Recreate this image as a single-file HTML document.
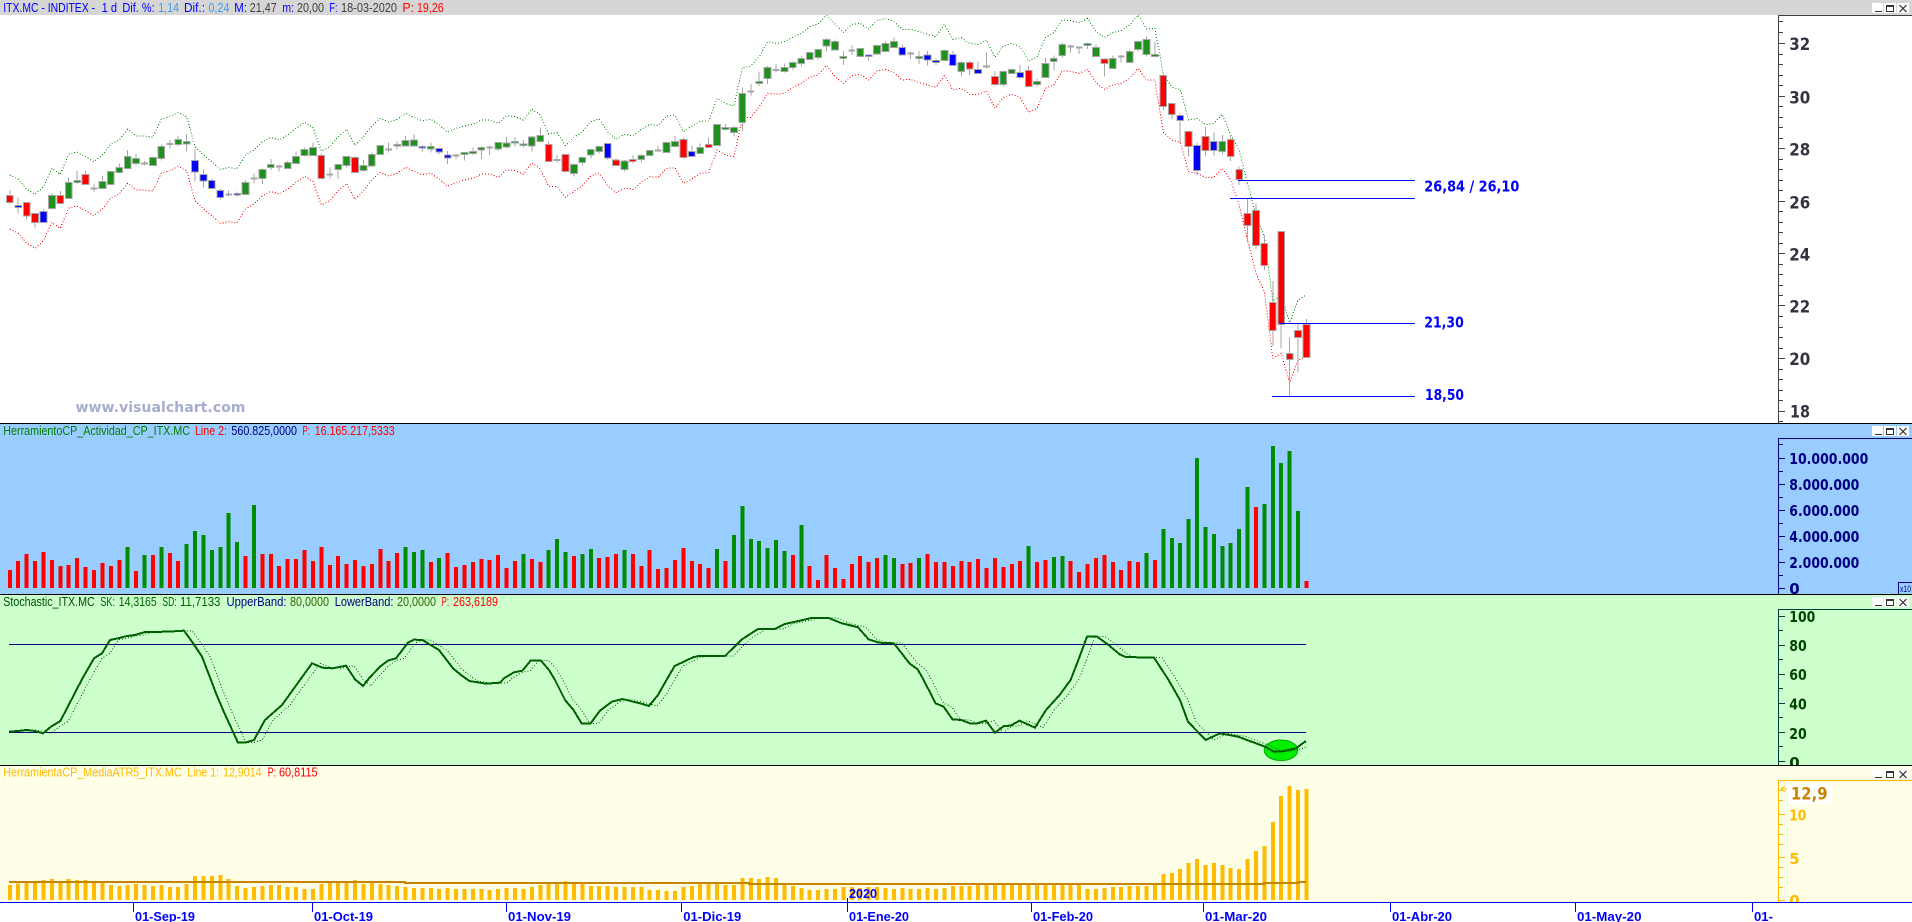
<!DOCTYPE html>
<html lang="es"><head><meta charset="utf-8"><title>ITX.MC - INDITEX</title>
<style>
html,body{margin:0;padding:0;width:1912px;height:922px;overflow:hidden;background:#fff}
svg{display:block}
text{white-space:pre}
.h{font:12.5px "Liberation Sans",sans-serif}
.a{font:bold 15px "DejaVu Sans",sans-serif}
.b{font:bold 17px "DejaVu Sans",sans-serif}
.d{font:bold 13px "Liberation Sans",sans-serif;fill:#00f}
.ns{vector-effect:non-scaling-stroke;fill:none}
.ns path,path.ns{vector-effect:non-scaling-stroke}
</style></head><body>
<svg xmlns="http://www.w3.org/2000/svg" width="1912" height="922" viewBox="0 0 1912 922" shape-rendering="crispEdges">
<defs>
<clipPath id="sdclip"><rect x="9" y="595" width="1297" height="170"/></clipPath>
<g id="btn">
<rect x="1872" y="0" width="11" height="10" fill="#fff"/><rect x="1884" y="0" width="12" height="10" fill="#fff"/><rect x="1897" y="0" width="12" height="10" fill="#fff"/>
<path d="M1875 8.5h7M1886.5 2.5h7v6h-7zM1886.5 3.5h7" fill="none" stroke="#333"/>
<path d="M1899.5 2L1906.5 9M1906.5 2L1899.5 9" fill="none" stroke="#333" stroke-width="1.2" shape-rendering="auto"/>
</g>
<path id="sk" d="M9 935L18 933 26.500 930 35 933 43 940 51 920 60.400 903 81.600 780 94 715 102 700 110 660 118 655 127 648 135 645 145 636 168 635 184 632 192 665 202 710 211 780 216 820 224.500 880 238 968 245 968 254 960 265 900 282 855 300 780 312 730 322.400 743 332.700 745 346 737 355 778 363 798 369 775 380 740 388 722 396 715 408 668 414 659 422.400 660 439 690 453 745 461 765 469.400 783 486 791 500 788 504 775 514 757 522.400 752 530.600 722 541 722 549 750 555 780 565 840 573.500 870 581.600 910 590.600 910 600 872 612 845 622.400 837 640 850 649 858 658 825 666.500 780 674.700 738 693 712 699 708 725 708 742 658 758 627 774.700 627 785 612 803 600 811.400 594 828.600 594 842 610 858 622 868.600 658 879 668 894 670 909.400 730 917.600 748 923.700 780 935.500 850 943.600 860 952.500 898 961.400 900 970 910 977 910 986 902 995 938 1004 918 1010.500 917 1019.500 902 1035 923 1046 870 1059.600 825 1070.600 780 1079 715 1087 650 1097 650 1107.300 672 1119.600 703 1125.700 711 1154 713 1168.600 780 1180 840 1188 905 1205.600 960 1220 940 1238 950 1265 980 1274 995 1280.600 995 1296 985 1306 963" style="vector-effect:non-scaling-stroke"/>
</defs>

<!-- panel backgrounds -->
<rect width="1912" height="423" fill="#fff"/>
<rect y="424" width="1912" height="170" fill="#9cf"/>
<rect y="595" width="1912" height="170" fill="#cfc"/>
<rect y="766" width="1912" height="136" fill="#ffffe8"/>

<!-- price panel -->
<g transform="translate(9.8 0) scale(8.42 .33333)">
<path class="ns" stroke="#080" stroke-dasharray="1 2" d="M0 525L1 537 2 568 3 583 4 560 5 505 6 523 7 462 8 456 9 470 10 485 11 465 12 432 13 420 14 388 15 408 16 408 17 412 18 357 19 350 20 337 21 350 22 440 23 465 24 485 25 508 26 503 27 506 28 465 29 450 30 425 31 412 32 420 33 405 34 385 35 367 36 382 37 453 38 440 39 410 40 388 41 437 42 410 43 378 44 355 45 366 46 358 47 340 48 352 49 362 50 358 51 375 52 397 53 385 54 378 55 373 56 360 57 360 58 370 59 347 60 350 61 360 62 327 63 345 64 402 65 398 66 437 67 412 68 395 69 365 70 357 71 395 72 418 73 403 74 407 75 388 76 373 77 377 78 348 79 345 80 395 81 378 82 363 83 363 84 295 85 310 86 318 87 203 88 198 89 170 90 125 91 130 92 125 93 112 94 100 95 80 96 72 97 45 98 72 99 97 100 73 101 70 102 87 103 62 104 55 105 65 106 88 107 88 108 95 109 103 110 110 111 73 112 118 113 113 114 130 115 133 116 120 117 172 118 138 119 130 120 140 121 182 122 172 123 112 124 98 125 60 126 62 127 68 128 55 129 95 130 112 131 98 132 92 133 75 134 45 135 87 136 85 137 222 138 262 139 268 140 360 141 355 142 374 143 370 144 343 145 405 146 450 147 550 148 645 149 710 150 903 151 885 152 968 153 900 154 885"/>
<path class="ns" stroke="#f00" stroke-dasharray="1 2" d="M0 687L1 699 2 730 3 745 4 722 5 667 6 685 7 624 8 618 9 632 10 647 11 627 12 594 13 582 14 550 15 570 16 570 17 574 18 519 19 512 20 499 21 512 22 602 23 627 24 647 25 670 26 665 27 668 28 627 29 612 30 587 31 574 32 582 33 567 34 547 35 529 36 544 37 615 38 602 39 572 40 550 41 599 42 572 43 540 44 517 45 528 46 520 47 502 48 514 49 524 50 520 51 537 52 559 53 547 54 540 55 535 56 522 57 522 58 532 59 509 60 512 61 522 62 489 63 507 64 560 65 560 66 592 67 574 68 557 69 527 70 519 71 557 72 578 73 565 74 568 75 548 76 530 77 532 78 505 79 503 80 550 81 537 82 520 83 518 84 450 85 465 86 470 87 355 88 352 89 320 90 280 91 283 92 280 93 262 94 250 95 232 96 225 97 196 98 230 99 250 100 227 101 223 102 240 103 213 104 208 105 218 106 240 107 238 108 248 109 255 110 262 111 227 112 270 113 265 114 283 115 283 116 273 117 325 118 292 119 283 120 293 121 337 122 325 123 265 124 255 125 212 126 215 127 220 128 208 129 248 130 268 131 255 132 250 133 235 134 205 135 240 136 240 137 398 138 420 139 427 140 515 141 520 142 532 143 532 144 505 145 540 146 615 147 720 148 820 149 875 150 1075 151 1060 152 1148 153 1080 154 1070"/>
<path class="ns" stroke="#a6a6a6" d="M0 570V612M1 592V640M2 608V658M3 641V683M4 628V667M5 580V628M6 573V612M7 532V597M8 513V552M9 513V555M10 550V575M11 528V567M12 515V555M13 490V520M14 450V507M15 462V497M16 483V497M17 470V498M18 434V482M19 420V445M20 408V440M21 402V455M22 447V545M23 507V563M24 535V565M25 567V598M26 572V590M27 575V590M28 540V585M29 520V550M30 505V552M31 477V510M32 493V515M33 483V505M34 455V490M35 443V470M36 428V466M37 460V538M38 502V535M39 490V537M40 468V502M41 468V517M42 480V515M43 458V500M44 435V465M45 428V458M46 425V448M47 408V440M48 402V440M49 435V455M50 427V458M51 442V463M52 453V492M53 462V478M54 456V482M55 442V465M56 440V477M57 437V465M58 428V453M59 411V445M60 411V440M61 420V443M62 408V455M63 382V428M64 424V486M65 465V488M66 462V517M67 490V530M68 470V497M69 445V475M70 436V460M71 431V478M72 476V498M73 480V514M74 465V490M75 462V488M76 450V468M77 437V456M78 425V458M79 408V442M80 412V476M81 436V470M82 430V460M83 412V442M84 372V437M85 372V392M86 376V410M87 262V395M88 252V287M89 216V258M90 198V252M91 190V218M92 190V218M93 185V210M94 170V200M95 155V180M96 147V178M97 114V155M98 118V152M99 153V195M100 135V165M101 144V170M102 163V183M103 133V165M104 124V157M105 113V143M106 133V165M107 155V177M108 153V192M109 153V197M110 175V195M111 149V182M112 153V198M113 185V230M114 183V225M115 185V222M116 158V205M117 213V258M118 212V260M119 205V222M120 195V236M121 198V261M122 235V260M123 172V234M124 167V210M125 127V172M126 135V158M127 140V162M128 128V147M129 133V172M130 175V230M131 166V207M132 165V188M133 148V189M134 122V155M135 110V170M136 125V172M137 222V330M138 311V357M139 340V430M140 392V470M141 427V527M142 380V470M143 397V467M144 405V464M145 408V483M146 500V555M147 597V725M148 610V747M149 705V810M150 843V1038M151 694V1045M152 1013V1188M153 972V1118M154 957V1072"/>
<path class="ns" stroke="#a6a6a6" stroke-width="2" d="M9.6 566h.8M15.6 490h.8M18.6 432h.8M25.6 583h.8M28.6 535h.8M31.6 500h.8M37.6 524h.8M44.6 448h.8M52.6 467h.8M56.6 442h.8M64.6 480h.8M76.6 452h.8M87.6 275h.8M90.6 210h.8M99.6 151h.8M106.6 161h.8M115.6 200h.8M125.6 139h.8M126.6 143h.8M131.6 170h.8"/>
<path class="ns" style="fill:#1e901e" stroke="#a6a6a6" d="M4.6 586h.8V625h-.8zM6.6 548h.8V595h-.8zM7.6 541h.8V548h-.8zM10.6 545h.8V565h-.8zM11.6 515h.8V553h-.8zM12.6 502h.8V517h-.8zM13.6 470h.8V505h-.8zM14.6 476h.8V490h-.8zM16.6 473h.8V496h-.8zM17.6 440h.8V475h-.8zM19.6 419h.8V433h-.8zM20.6 425h.8V432h-.8zM27.6 548h.8V583h-.8zM29.6 508h.8V535h-.8zM30.6 493h.8V502h-.8zM32.6 488h.8V505h-.8zM33.6 470h.8V490h-.8zM34.6 449h.8V467h-.8zM35.6 442h.8V466h-.8zM38.6 494h.8V508h-.8zM39.6 469h.8V496h-.8zM41.6 497h.8V511h-.8zM42.6 464h.8V498h-.8zM43.6 437h.8V463h-.8zM45.6 433h.8V438h-.8zM46.6 422h.8V438h-.8zM47.6 420h.8V438h-.8zM49.6 440h.8V447h-.8zM53.6 458h.8V463h-.8zM54.6 455h.8V460h-.8zM55.6 442h.8V450h-.8zM57.6 428h.8V447h-.8zM58.6 429h.8V441h-.8zM59.6 425h.8V429h-.8zM60.6 432h.8V437h-.8zM61.6 411h.8V438h-.8zM62.6 407h.8V425h-.8zM66.6 494h.8V520h-.8zM67.6 472h.8V487h-.8zM68.6 449h.8V465h-.8zM69.6 440h.8V454h-.8zM72.6 483h.8V508h-.8zM74.6 466h.8V478h-.8zM75.6 452h.8V466h-.8zM77.6 428h.8V457h-.8zM78.6 424h.8V440h-.8zM81.6 443h.8V460h-.8zM83.6 373h.8V437h-.8zM84.6 382h.8V388h-.8zM85.6 383h.8V397h-.8zM86.6 280h.8V367h-.8zM88.6 244h.8V250h-.8zM89.6 203h.8V236h-.8zM91.6 203h.8V214h-.8zM92.6 188h.8V202h-.8zM93.6 175h.8V190h-.8zM94.6 157h.8V178h-.8zM95.6 149h.8V172h-.8zM96.6 119h.8V138h-.8zM97.6 125h.8V150h-.8zM98.6 170h.8V175h-.8zM100.6 146h.8V169h-.8zM102.6 137h.8V162h-.8zM103.6 130h.8V154h-.8zM104.6 125h.8V142h-.8zM107.6 170h.8V175h-.8zM110.6 152h.8V181h-.8zM112.6 188h.8V214h-.8zM117.6 215h.8V254h-.8zM118.6 208h.8V220h-.8zM121.6 245h.8V253h-.8zM122.6 191h.8V232h-.8zM123.6 176h.8V184h-.8zM124.6 133h.8V166h-.8zM127.6 130h.8V136h-.8zM128.6 142h.8V170h-.8zM130.6 176h.8V205h-.8zM132.6 155h.8V187h-.8zM133.6 125h.8V149h-.8zM134.6 119h.8V163h-.8zM135.6 164h.8V169h-.8zM143.6 424h.8V454h-.8z"/>
<path class="ns" style="fill:#f00" stroke="#a6a6a6" d="M-.4 587h.8V607h-.8zM1.6 608h.8V648h-.8zM2.6 641h.8V667h-.8zM5.6 587h.8V610h-.8zM8.6 524h.8V553h-.8zM36.6 467h.8V536h-.8zM40.6 473h.8V517h-.8zM63.6 434h.8V484h-.8zM65.6 464h.8V514h-.8zM71.6 480h.8V496h-.8zM73.6 479h.8V484h-.8zM79.6 419h.8V472h-.8zM82.6 433h.8V442h-.8zM113.6 188h.8V207h-.8zM116.6 230h.8V254h-.8zM120.6 212h.8V259h-.8zM129.6 177h.8V190h-.8zM136.6 227h.8V319h-.8zM137.6 311h.8V343h-.8zM139.6 394h.8V439h-.8zM141.6 409h.8V451h-.8zM144.6 419h.8V470h-.8zM145.6 508h.8V538h-.8zM146.6 641h.8V676h-.8zM147.6 631h.8V737h-.8zM148.6 730h.8V796h-.8zM149.6 907h.8V991h-.8zM150.6 694h.8V973h-.8zM151.6 1061h.8V1078h-.8zM152.6 991h.8V1012h-.8zM153.6 973h.8V1072h-.8z"/>
<path class="ns" style="fill:#00f" stroke="#a6a6a6" d="M.6 617h.8V622h-.8zM3.6 635h.8V667h-.8zM21.6 482h.8V516h-.8zM22.6 524h.8V543h-.8zM23.6 542h.8V565h-.8zM24.6 572h.8V592h-.8zM26.6 581h.8V585h-.8zM48.6 440h.8V444h-.8zM50.6 446h.8V456h-.8zM51.6 465h.8V474h-.8zM70.6 431h.8V474h-.8zM80.6 455h.8V470h-.8zM101.6 165h.8V169h-.8zM105.6 143h.8V165h-.8zM108.6 165h.8V180h-.8zM109.6 182h.8V187h-.8zM111.6 164h.8V196h-.8zM114.6 209h.8V220h-.8zM119.6 218h.8V232h-.8zM138.6 347h.8V361h-.8zM140.6 437h.8V511h-.8zM142.6 425h.8V451h-.8z"/>
</g>
<path d="M1238 180.500H1415M1230 198.500H1415M1280 323.500H1415M1272 396.500H1415" fill="none" stroke="#00f"/>
<text class="a" x="1424.300" y="191.300" fill="#00f" textLength="95" lengthAdjust="spacingAndGlyphs">26,84 / 26,10</text>
<text class="a" x="1424.300" y="327.700" fill="#00f" textLength="39.500" lengthAdjust="spacingAndGlyphs">21,30</text>
<text class="a" x="1425" y="400" fill="#00f" textLength="39" lengthAdjust="spacingAndGlyphs">18,50</text>
<text x="75.500" y="412" fill="#a8acd0" style="font:bold 14px 'DejaVu Sans',sans-serif" textLength="170" lengthAdjust="spacingAndGlyphs">www.visualchart.com</text>

<!-- header strip -->
<rect width="1912" height="15" fill="#d6d6d6"/>
<g class="h">
<text x="3.300" y="12" fill="#00f" textLength="91.700" lengthAdjust="spacingAndGlyphs">ITX.MC - INDITEX -</text>
<text x="101.600" y="12" fill="#00f" textLength="15.400" lengthAdjust="spacingAndGlyphs">1 d</text>
<text x="122.400" y="12" fill="#00f" textLength="32.300" lengthAdjust="spacingAndGlyphs">Dif. %:</text>
<text x="158.400" y="12" fill="#3f9be8" textLength="20.600" lengthAdjust="spacingAndGlyphs">1,14</text>
<text x="184" y="12" fill="#00f" textLength="21" lengthAdjust="spacingAndGlyphs">Dif.:</text>
<text x="208.600" y="12" fill="#3f9be8" textLength="20.800" lengthAdjust="spacingAndGlyphs">0,24</text>
<text x="234.300" y="12" fill="#00f" textLength="12.700" lengthAdjust="spacingAndGlyphs">M:</text>
<text x="249.800" y="12" fill="#404040" textLength="26.900" lengthAdjust="spacingAndGlyphs">21,47</text>
<text x="282.400" y="12" fill="#00f" textLength="11.600" lengthAdjust="spacingAndGlyphs">m:</text>
<text x="297" y="12" fill="#404040" textLength="27" lengthAdjust="spacingAndGlyphs">20,00</text>
<text x="329.400" y="12" fill="#00f" textLength="8.100" lengthAdjust="spacingAndGlyphs">F:</text>
<text x="341" y="12" fill="#404040" textLength="56" lengthAdjust="spacingAndGlyphs">18-03-2020</text>
<text x="402.400" y="12" fill="#f00" textLength="11.600" lengthAdjust="spacingAndGlyphs">P:</text>
<text x="417" y="12" fill="#f00" textLength="26.700" lengthAdjust="spacingAndGlyphs">19,26</text>
</g>
<use href="#btn" y="3"/>

<!-- price axis -->
<path d="M1778.500 15V423M1778 15.500H1912" fill="none" stroke="#404040"/>
<path d="M1779 43.500h6M1779 96.500h6M1779 148.500h6M1779 201.500h6M1779 253.500h6M1779 305.500h6M1779 358.500h6M1779 411.500h6M1779 21.500h4M1779 32.500h4M1779 54.500h4M1779 64.500h4M1779 75.500h4M1779 85.500h4M1779 106.500h4M1779 117.500h4M1779 127.500h4M1779 138.500h4M1779 159.500h4M1779 169.500h4M1779 180.500h4M1779 190.500h4M1779 211.500h4M1779 222.500h4M1779 232.500h4M1779 243.500h4M1779 264.500h4M1779 274.500h4M1779 285.500h4M1779 295.500h4M1779 316.500h4M1779 327.500h4M1779 337.500h4M1779 348.500h4M1779 369.500h4M1779 379.500h4M1779 390.500h4M1779 400.500h4M1779 421.500h4" fill="none" stroke="#404040"/>
<g class="b" fill="#333340">
<text x="1789.300" y="50" textLength="21" lengthAdjust="spacingAndGlyphs">32</text>
<text x="1789.300" y="103.300" textLength="21" lengthAdjust="spacingAndGlyphs">30</text>
<text x="1789.300" y="155.700" textLength="21" lengthAdjust="spacingAndGlyphs">28</text>
<text x="1789.300" y="208.300" textLength="21" lengthAdjust="spacingAndGlyphs">26</text>
<text x="1789.300" y="260.700" textLength="21" lengthAdjust="spacingAndGlyphs">24</text>
<text x="1789.300" y="312.300" textLength="21" lengthAdjust="spacingAndGlyphs">22</text>
<text x="1789.300" y="365" textLength="21" lengthAdjust="spacingAndGlyphs">20</text>
<text x="1790" y="417.300" textLength="20" lengthAdjust="spacingAndGlyphs">18</text>
</g>
<rect y="423" width="1912" height="1" fill="#000"/>

<!-- activity panel -->
<g class="h">
<text x="3.300" y="435" fill="#008000" textLength="186.700" lengthAdjust="spacingAndGlyphs">HerramientoCP_Actividad_CP_ITX.MC</text>
<text x="195" y="435" fill="#f00" textLength="32" lengthAdjust="spacingAndGlyphs">Line 2:</text>
<text x="231.400" y="435" fill="#000080" textLength="65.600" lengthAdjust="spacingAndGlyphs">560.825,0000</text>
<text x="302.400" y="435" fill="#f00" textLength="7.600" lengthAdjust="spacingAndGlyphs">P:</text>
<text x="314.700" y="435" fill="#f00" textLength="80" lengthAdjust="spacingAndGlyphs">16.165.217,5333</text>
</g>
<g transform="translate(9.8 420) scale(8.42 .33333)">
<path class="ns" stroke="#f00" stroke-width="4" d="M0 450V504M1 423V504M2 402V504M3 423V504M4 396V504M5 420V504M6 438V504M7 435V504M8 414V504M9 441V504M10 450V504M11 429V504M12 438V504M13 420V504M15 453V504M17 405V504M19 399V504M20 423V504M28 408V504M30 402V504M31 402V504M32 438V504M33 417V504M34 417V504M35 390V504M36 423V504M37 381V504M38 435V504M39 408V504M40 432V504M41 420V504M42 438V504M43 432V504M44 387V504M45 423V504M46 399V504M50 426V504M52 399V504M53 441V504M54 435V504M55 426V504M56 417V504M57 420V504M58 405V504M59 444V504M60 423V504M62 417V504M63 426V504M67 408V504M70 414V504M71 411V504M72 402V504M74 402V504M75 438V504M76 390V504M77 447V504M78 444V504M79 420V504M80 384V504M81 423V504M82 432V504M83 444V504M85 423V504M93 405V504M95 438V504M96 480V504M97 405V504M98 444V504M99 477V504M100 432V504M101 408V504M102 426V504M103 414V504M106 432V504M107 429V504M109 402V504M110 426V504M111 426V504M112 438V504M113 423V504M114 426V504M115 417V504M116 444V504M117 414V504M118 441V504M119 432V504M120 423V504M122 426V504M123 420V504M126 423V504M127 456V504M128 432V504M129 414V504M130 405V504M131 426V504M132 450V504M133 423V504M134 426V504M136 420V504M148 261V504M154 483V504"/>
<path class="ns" stroke="#008c00" stroke-width="4" d="M14 381V504M16 405V504M18 381V504M21 372V504M22 333V504M23 345V504M24 390V504M25 381V504M26 279V504M27 366V504M29 255V504M47 381V504M48 396V504M49 390V504M51 414V504M61 402V504M64 390V504M65 357V504M66 396V504M68 402V504M69 387V504M73 390V504M84 387V504M86 345V504M87 258V504M88 357V504M89 363V504M90 384V504M91 360V504M92 393V504M94 315V504M104 405V504M105 414V504M108 414V504M121 378V504M124 411V504M125 408V504M135 399V504M137 327V504M138 354V504M139 369V504M140 297V504M141 114V504M142 321V504M143 342V504M144 378V504M145 369V504M146 327V504M147 201V504M149 252V504M150 78V504M151 129V504M152 93V504M153 273V504"/>
</g>
<use href="#btn" y="426"/>
<path d="M1778.500 438V594M1778 438.500H1912M1779 458.500h6M1779 484.500h6M1779 510.500h6M1779 536.500h6M1779 562.500h6M1779 588.500h6M1779 444.500h4M1779 471.500h4M1779 497.500h4M1779 523.500h4M1779 549.500h4M1779 575.500h4" fill="none" stroke="#000080"/>
<g class="a" fill="#000080">
<text x="1789.300" y="464" textLength="79" lengthAdjust="spacingAndGlyphs">10.000.000</text>
<text x="1789.300" y="490" textLength="70" lengthAdjust="spacingAndGlyphs">8.000.000</text>
<text x="1789.300" y="516" textLength="70" lengthAdjust="spacingAndGlyphs">6.000.000</text>
<text x="1789.300" y="542" textLength="70" lengthAdjust="spacingAndGlyphs">4.000.000</text>
<text x="1789.300" y="568" textLength="70" lengthAdjust="spacingAndGlyphs">2.000.000</text>
<text x="1789.300" y="594">0</text>
</g>
<rect x="1898.500" y="582.500" width="14" height="12" fill="none" stroke="#000080"/>
<text x="1900" y="592" fill="#000080" style="font:9px 'Liberation Sans',sans-serif" textLength="11" lengthAdjust="spacingAndGlyphs">x10</text>
<rect y="594" width="1912" height="1" fill="#000"/>
<rect y="595" width="1912" height="1" fill="#cfc"/>

<!-- stochastic panel -->
<g class="h">
<text x="3.300" y="606" fill="#005000" textLength="91.400" lengthAdjust="spacingAndGlyphs">Stochastic_ITX.MC</text>
<text x="100.400" y="606" fill="#006400" textLength="14.600" lengthAdjust="spacingAndGlyphs">SK:</text>
<text x="118.800" y="606" fill="#006400" textLength="37.900" lengthAdjust="spacingAndGlyphs">14,3165</text>
<text x="162.400" y="606" fill="#006400" textLength="14.300" lengthAdjust="spacingAndGlyphs">SD:</text>
<text x="180" y="606" fill="#006400" textLength="40.400" lengthAdjust="spacingAndGlyphs">11,7133</text>
<text x="226.500" y="606" fill="#000080" textLength="60" lengthAdjust="spacingAndGlyphs">UpperBand:</text>
<text x="290" y="606" fill="#336600" textLength="39" lengthAdjust="spacingAndGlyphs">80,0000</text>
<text x="334.700" y="606" fill="#000080" textLength="58.800" lengthAdjust="spacingAndGlyphs">LowerBand:</text>
<text x="397" y="606" fill="#336600" textLength="39" lengthAdjust="spacingAndGlyphs">20,0000</text>
<text x="441.600" y="606" fill="#f00" textLength="7.400" lengthAdjust="spacingAndGlyphs">P:</text>
<text x="453" y="606" fill="#f00" textLength="45" lengthAdjust="spacingAndGlyphs">263,6189</text>
</g>
<path d="M9 644.500H1306M9 732.500H1306" fill="none" stroke="#000080"/>
<ellipse cx="1281" cy="750.300" rx="16.800" ry="10.300" fill="#0e0" stroke="#0a0" shape-rendering="auto"/>
<g clip-path="url(#sdclip)"><g transform="translate(8 420) scale(1 .33333)" fill="none" stroke="#005f00" stroke-dasharray="1 2"><use href="#sk"/></g></g>
<g transform="translate(0 420) scale(1 .33333)" fill="none" stroke="#005f00" stroke-width="2"><use href="#sk"/></g>
<use href="#btn" y="597"/>
<path d="M1778.500 609V765M1778 609.500H1912M1779 616.500h6M1779 645.500h6M1779 674.500h6M1779 703.500h6M1779 732.500h6M1779 761.500h6M1779 630.500h4M1779 659.500h4M1779 688.500h4M1779 717.500h4M1779 746.500h4" fill="none" stroke="#004038"/>
<g class="a" fill="#004400">
<text x="1789.300" y="622" textLength="26" lengthAdjust="spacingAndGlyphs">100</text>
<text x="1789.300" y="651" textLength="17.500" lengthAdjust="spacingAndGlyphs">80</text>
<text x="1789.300" y="680" textLength="17.500" lengthAdjust="spacingAndGlyphs">60</text>
<text x="1789.300" y="709.500" textLength="17.500" lengthAdjust="spacingAndGlyphs">40</text>
<text x="1789.300" y="739" textLength="17.500" lengthAdjust="spacingAndGlyphs">20</text>
<text x="1789.300" y="768">0</text>
</g>
<rect y="765" width="1912" height="1" fill="#000"/>
<rect y="766" width="1912" height="3" fill="#ffffe8"/>

<!-- ATR panel -->
<g class="h">
<text x="3.300" y="776.700" fill="#fb0" textLength="178.300" lengthAdjust="spacingAndGlyphs">HerramientaCP_MediaATR5_ITX.MC</text>
<text x="187.300" y="776.700" fill="#fb0" textLength="31.700" lengthAdjust="spacingAndGlyphs">Line 1:</text>
<text x="223" y="776.700" fill="#fb0" textLength="38.600" lengthAdjust="spacingAndGlyphs">12,9014</text>
<text x="267.800" y="776.700" fill="#f00" textLength="8.200" lengthAdjust="spacingAndGlyphs">P:</text>
<text x="279" y="776.700" fill="#f00" textLength="38.600" lengthAdjust="spacingAndGlyphs">60,8115</text>
</g>
<g transform="translate(9.8 680) scale(8.42 .33333)">
<path class="ns" stroke="#fb0" stroke-width="4" d="M0 615V660M1 610V660M2 607V660M3 607V660M4 600V660M5 597V660M6 607V660M7 597V660M8 600V660M9 600V660M10 607V660M11 607V660M12 615V660M13 618V660M14 615V660M15 612V660M16 615V660M17 618V660M18 615V660M19 621V660M20 621V660M21 612V660M22 588V660M23 588V660M24 588V660M25 585V660M26 597V660M27 618V660M28 624V660M29 621V660M30 618V660M31 615V660M32 615V660M33 621V660M34 621V660M35 627V660M36 627V660M37 612V660M38 606V660M39 606V660M40 606V660M41 600V660M42 612V660M43 606V660M44 612V660M45 615V660M46 618V660M47 621V660M48 624V660M49 624V660M50 624V660M51 627V660M52 624V660M53 627V660M54 627V660M55 627V660M56 627V660M57 630V660M58 627V660M59 624V660M60 624V660M61 627V660M62 621V660M63 615V660M64 609V660M65 609V660M66 603V660M67 609V660M68 609V660M69 618V660M70 618V660M71 618V660M72 621V660M73 621V660M74 621V660M75 621V660M76 630V660M77 630V660M78 633V660M79 633V660M80 621V660M81 618V660M82 612V660M83 609V660M84 612V660M85 615V660M86 615V660M87 594V660M88 594V660M89 597V660M90 591V660M91 594V660M92 612V660M93 618V660M94 624V660M95 630V660M96 630V660M97 627V660M98 627V660M99 621V660M100 621V660M101 624V660M102 621V660M103 621V660M104 624V660M105 627V660M106 624V660M107 627V660M108 627V660M109 624V660M110 627V660M111 624V660M112 618V660M113 618V660M114 618V660M115 615V660M116 612V660M117 612V660M118 612V660M119 612V660M120 612V660M121 612V660M122 612V660M123 612V660M124 612V660M125 612V660M126 612V660M127 612V660M128 627V660M129 627V660M130 624V660M131 621V660M132 621V660M133 618V660M134 618V660M135 618V660M136 612V660M137 582V660M138 579V660M139 567V660M140 549V660M141 537V660M142 555V660M143 549V660M144 555V660M145 564V660M146 567V660M147 537V660M148 513V660M149 498V660M150 426V660M151 348V660M152 318V660M153 330V660M154 327V660"/>
</g>
<path d="M9 882H405V883H749V884H1264V883H1298V882H1306" fill="none" stroke="#c68400" stroke-width="2"/>
<use href="#btn" y="769"/>
<path d="M1778.500 780V902M1778 780.500H1912M1779 814.500h6M1779 857.500h6M1779 900.500h6M1779 800.500h4M1779 824.500h4M1779 834.500h4M1779 844.500h4M1779 867.500h4M1779 877.500h4M1779 887.500h4M1779 790.500h4" fill="none" stroke="#fb0"/>
<path d="M1785 786L1781 789L1785 792M1781 789H1787" fill="none" stroke="#fb0" shape-rendering="auto"/>
<rect x="1788" y="784" width="44" height="20" fill="#fff"/>
<text class="b" x="1791" y="799.300" fill="#c68400" textLength="36.500" lengthAdjust="spacingAndGlyphs">12,9</text>
<g class="a" fill="#fb0">
<text x="1789.300" y="820.700" textLength="17" lengthAdjust="spacingAndGlyphs">10</text>
<text x="1789.300" y="864">5</text>
<text x="1789.300" y="906">0</text>
</g>

<!-- bottom date axis -->
<rect y="902" width="1912" height="20" fill="#fff"/>
<rect y="902" width="1912" height="1" fill="#00f"/>
<path d="M133.500 902v10M312.500 902v10M506.500 902v10M681.500 902v10M847.500 898v14M1031.500 902v10M1203.500 902v10M1390.500 902v10M1575.500 902v10M1752.500 902v10" fill="none" stroke="#00f"/>
<text class="d" x="849" y="898" textLength="28" lengthAdjust="spacingAndGlyphs">2020</text>
<text class="d" x="135" y="921" textLength="60" lengthAdjust="spacingAndGlyphs">01-Sep-19</text>
<text class="d" x="314" y="921" textLength="59" lengthAdjust="spacingAndGlyphs">01-Oct-19</text>
<text class="d" x="508" y="921" textLength="63" lengthAdjust="spacingAndGlyphs">01-Nov-19</text>
<text class="d" x="683.300" y="921" textLength="58" lengthAdjust="spacingAndGlyphs">01-Dic-19</text>
<text class="d" x="849" y="921" textLength="60" lengthAdjust="spacingAndGlyphs">01-Ene-20</text>
<text class="d" x="1033" y="921" textLength="60" lengthAdjust="spacingAndGlyphs">01-Feb-20</text>
<text class="d" x="1205" y="921" textLength="62" lengthAdjust="spacingAndGlyphs">01-Mar-20</text>
<text class="d" x="1392" y="921" textLength="60" lengthAdjust="spacingAndGlyphs">01-Abr-20</text>
<text class="d" x="1577" y="921" textLength="64.500" lengthAdjust="spacingAndGlyphs">01-May-20</text>
<text class="d" x="1754" y="921" textLength="19" lengthAdjust="spacingAndGlyphs">01-</text>
</svg>
</body></html>
